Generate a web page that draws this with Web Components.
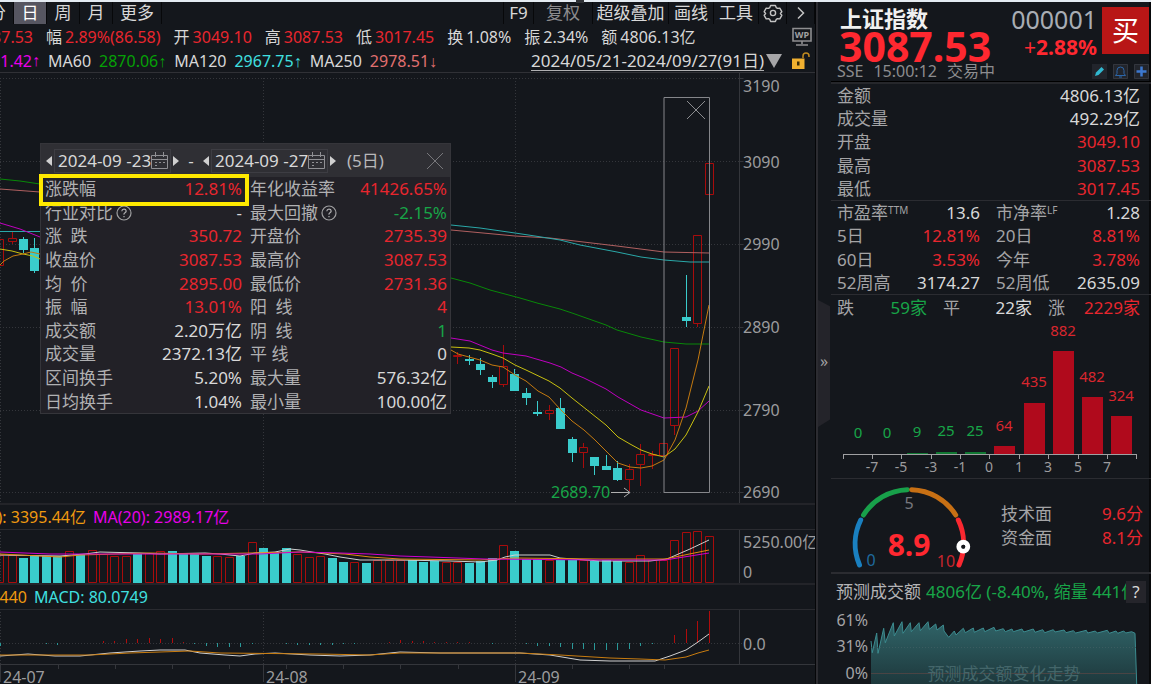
<!DOCTYPE html>
<html lang="zh-CN">
<head>
<meta charset="utf-8">
<title>上证指数 000001</title>
<style>
  html, body { margin: 0; height: 100%; background: #14171c; }
  body {
    overflow: hidden;
    font-family: "Noto Sans", "Noto Sans CJK SC", sans-serif;
    font-size: 17px;
    line-height: 24px;
    color: #d8d8d8;
    --red: #e8262e;
    --green: #18a548;
    --muted: #a4a4a6;
    --rule: #2b2c31;
    --cyan: #3acccc;
  }
</style>
</head>
<body>
<stock-terminal></stock-terminal>
<script>
const BASE = `<style>
  :host { display: block; box-sizing: border-box; }
  * { box-sizing: border-box; }
  svg { display: block; }
  button, input { font: inherit; color: inherit; background: none; border: 0; padding: 0; margin: 0; }
  a { color: inherit; }
  table { border-collapse: collapse; width: 100%; }
  th, td { padding: 0; font-weight: 400; line-height: 23px; white-space: nowrap; }
  th { text-align: left; color: var(--muted); }
  td { text-align: right; }
  .r { color: var(--red); } .g { color: var(--green); }
</style>`;
function component(name, render) {
  customElements.define(name, class extends HTMLElement {
    constructor() { super(); this.attachShadow({ mode: "open" }); }
    connectedCallback() { this.shadowRoot.innerHTML = BASE + render(this); }
  });
}
const line = (color, pts) => `<polyline points="${pts}" fill="none" stroke="${color}"/>`;
const barX = i => Math.floor(0.6 + 11.43 * i);
const RED = "#a80c0c", CYAN = "#3acccc";

component("tool-bar", () => `<style>
  :host { display: flex; justify-content: space-between; height: 22px; font-size: 17px; line-height: 20px; overflow: hidden; }
  div { display: flex; }
  button { border-right: 1px solid #07080a; display: flex; align-items: center; justify-content: center; white-space: nowrap; }
  .cut { width: 14px; justify-content: flex-end; padding-right: 7px; }
  .one { width: 33px; } .on { background: #565661; color: #fff; }
  .more { width: 49px; } .f9 { width: 31px; border-left: 1px solid #07080a; } .fq { width: 59px; color: #8c8c8e; }
  .dj { width: 76px; } .two { width: 45px; } .ic { width: 28px; }
</style>
<div><button class="cut">分</button><button class="one on">日</button><button class="one">周</button><button class="one">月</button><button class="more">更多</button></div>
<div><button class="f9">F9</button><button class="fq">复权</button><button class="dj">超级叠加</button><button class="two">画线</button><button class="two">工具</button>
<button class="ic" aria-label="设置"><svg width="20" height="20" viewBox="0 0 20 20" fill="none" stroke="#c4c4c4" stroke-width="1.4" stroke-linejoin="round"><path d="M7.6 2.5h4.8l.9 2.2 1.2.7 2.3-.3 2 3.6-1.4 1.8 1.4 1.8-2 3.6-2.3-.3-1.2.7-.9 2.2H7.6l-.9-2.2-1.2-.7-2.3.3-2-3.6 1.4-1.8L1.200 8.700l2-3.600 2.300.300 1.200-.700z"/><circle cx="10" cy="10" r="2.600"/></svg></button>
<button class="ic" aria-label="下一页"><svg width="10" height="14" viewBox="0 0 10 14" fill="none" stroke="#c4c4c4" stroke-width="1.500"><path d="M2 1.500 7.500 7 2 12.500"/></svg></button></div>`);

component("quote-strip", () => {
  const items = [["幅","2.89%(86.58)","r"],["开","3049.10","r"],["高","3087.53","r"],["低","3017.45","r"],["换","1.08%",""],["振","2.34%",""],["额","4806.13亿",""]];
  return `<style>
  :host { display: flex; align-items: center; height: 26px; font-size: 16px; white-space: nowrap; gap: 13px; position: relative; }
  .cut { width: 33px; display: flex; justify-content: flex-end; overflow: hidden; }
  span { display: flex; gap: 3px; }
  button { margin: 0 3px 0 auto; height: 20px; }
  </style><div class="cut r">3087.53</div>` + items.map(([k, v, c]) => `<span>${k}<b style="font-weight:400" class="${c}">${v}</b></span>`).join("") +
  `<button aria-label="WP"><svg width="20" height="20" viewBox="0 0 20 20"><path d="M1 1.500h18v12.500H1zM10 14v3M4 18h12" fill="none" stroke="#8e8e90" stroke-width="1.600"/><text x="10" y="11" font-size="9" font-weight="700" text-anchor="middle" fill="#a0a0a2">WP</text></svg></button>`;
});

component("average-strip", () => `<style>
  :host { display: flex; align-items: center; height: 23px; font-size: 16px; white-space: nowrap; border-bottom: 1px solid #303136; gap: 8px; }
  .cut { width: 40px; display: flex; justify-content: flex-end; overflow: hidden; color: #ea00ea; }
  i { font-family: "Liberation Sans", sans-serif; font-style: normal; }
  a { margin-left: auto; font-size: 17px; line-height: 18px; text-decoration: none; border-bottom: 1px solid #b0b0b2; }
  .menu { margin-left: -6px; height: 16px; } .lock { margin: 0 5px 0 2px; height: 18px; }
</style>
<div class="cut">2891.42<i>↑</i></div><span>MA60</span><span style="color:#06a006">2870.06<i>↑</i></span><span>MA120</span><span style="color:#40e0e0">2967.75<i>↑</i></span><span>MA250</span><span style="color:#e07070">2978.51<i>↓</i></span>
<a href="#range">2024/05/21-2024/09/27(91日)</a>
<button class="menu" aria-label="选择区间"><svg width="16" height="14"><path d="M0 0h16L8 14z" fill="#a6a6a8"/></svg></button>
<button class="lock" aria-label="解锁"><svg width="18" height="18" viewBox="0 0 18 18"><path d="M0 6.500h12.500V17H0z" fill="#f0b030"/><path d="M11 6V4q0-3 3-3t3 3v1" fill="none" stroke="#c08a20" stroke-width="1.500"/><path d="M5 9.500h2.500v4H5z" fill="#3a2c08"/></svg></button>`);

component("price-chart", () => {
  const candles = [[0,"R",239,265,239,265],[1,"R",238,241,232,244],[2,"C",239,250,237,253],[3,"C",248,271,238,273],
    [40,"R",355,356,352,364],[41,"C",359,361,355,365],[42,"C",364,370,358,375],[43,"C",377,382,375,388],[44,"R",366,384,345,387],[45,"C",374,391,369,391],[46,"C",393,398,388,405],[47,"C",412,414,401,416],[48,"R",410,413,405,420],[49,"C",408,429,398,429],[50,"C",439,453,437,462],[51,"R",447,452,443,468],[52,"C",457,466,457,475],[53,"C",466,470,455,470],[54,"C",468,480,461,481],[55,"R",469,479,464,491],[56,"R",454,464,444,486],[57,"R",454,455,451,469],[58,"R",443,455,443,455],[59,"R",348,425,348,435],[60,"C",317,321,275,327],[61,"R",235,323,235,327],[62,"R",163,194,163,194]];
  const draw = ([i, t, a, b, w1, w2]) => { const x = barX(i);
    return t === "C" ? `<path d="M${x}.5 ${w1}V${w2}" stroke="${CYAN}"/><path d="M${x - 4} ${a}h9V${b}h-9z" fill="${CYAN}"/>`
      : `<path d="M${x}.5 ${w1}V${a}M${x}.5 ${b}V${w2}M${x - 4}.5 ${a}.5h8V${b}.5h-8z" stroke="${RED}" fill="none"/>`; };
  const ticks = [[78,3190,86],[161,3090,162],[244,2990,244],[327,2890,327],[410,2790,410],[492,2690,492]];
  return `<style>:host { position: relative; border-bottom: 2px solid #232429; } svg { width: 100%; height: auto; }
  .close { position: absolute; left: 84%; top: 26px; width: 22px; height: 22px; }</style>
  <svg viewBox="0 73 815 430">
  <g stroke="#34363b" stroke-dasharray="1 2" fill="none">${ticks.map(t => `<path d="M0 ${t[0]}.500H740"/>`).join("")}<path d="M.500 78V504M263.500 78V504M515.500 78V504"/></g>
  <path d="M739.500 73V504${ticks.map(t => `M739.500 ${t[0]}.500h4`).join("")}" stroke="#34363b"/>
  ${candles.map(draw).join("")}
  ${line("#b06060","0,189 40,192 240,215 451,230 515,236 550,238 575,241 617,246 664,252 709,253")}
  ${line("#2aa8a8","0,231.5 40,231.5 300,227 451,225 480,228 515,233 535,236 560,240 580,245 617,252 641,257 664,260 690,262 709,262")}
  ${line("#088808","0,179 20,181 40,184 240,230 451,278 470,283 490,290 505,294 520,298 537,303 560,309 572,313 606,325 617,330 641,337 664,342 686,344 709,344")}
  ${line("#c000c0","0,223 20,229 40,237 240,300 451,338 470,341 492,350 503,353 526,356 550,363 561,367 572,373 584,378 606,389 618,397 641,410 664,418 686,417 698,411 709,401")}
  ${line("#c8c010","0,249 12,251 23,254 33,256 40,259 240,320 451,347 469,348 480,350 492,354 503,358 515,365 526,370 549,381 560,388 572,398 606,425 618,437 630,444 641,450 652,454 664,457 675,449 686,435 698,412 709,386")}
  ${line("#c47a10","0,265 4,261 13,256 23,254 31,252 40,254 240,320 451,350 458,354 480,360 492,365 503,367 515,375 526,381 538,391 549,397 560,409 572,421 584,430 595,440 606,451 618,463 630,467 641,468 652,466 664,460 675,440 686,408 698,360 709,305")}
  <path d="M664 97.500H709.500V492.500H664z" stroke="#85868a" fill="none"/>
  <path d="M611 492.500h18M624 488l6 4.500-6 4.500" stroke="#b0b0b0" fill="none"/>
  <text x="551" y="498" font-size="16" fill="#18a548">2689.70</text>
  <g font-size="16" fill="#9c9c9e">${ticks.map(t => `<text x="743" y="${t[2] + 6}">${t[1]}</text>`).join("")}</g></svg>
  <button class="close" aria-label="关闭区间"><svg width="22" height="22"><path d="M2 2 20 20M20 2 2 20" stroke="#8c8d90"/></svg></button>
  <slot></slot>`;
});

component("date-picker", el => `<style>
  :host { display: flex; align-items: center; gap: 2px; }
  .box { display: flex; align-items: center; border: 1px solid #3d3d43; height: 24px; width: 117px; padding-left: 3px; }
  input { width: 93px; height: 22px; outline: 0; flex: none; }
  button { display: flex; }
</style><button aria-label="前一日"><svg width="6" height="10"><path d="M6 0v10L0 5z" fill="#d0d0d0"/></svg></button>
<div class="box"><input type="text" aria-label="${el.getAttribute("label")}" value="${el.getAttribute("value")}"><button aria-label="日历"><svg width="17" height="17" fill="none" stroke="#909094"><path d="M.500 3.500h16v13H.500zM.500 7.500h16M4.500 0v5M12.500 0v5M4 10.500h2M8 10.500h2M12 10.500h2M4 13.500h2"/></svg></button></div>
<button aria-label="后一日"><svg width="6" height="10"><path d="M0 0v10l6-5z" fill="#d0d0d0"/></svg></button>`);

component("range-stats", () => {
  const q = ` <button aria-label="说明"><svg width="16" height="16" viewBox="0 0 16 16"><circle cx="8" cy="8" r="7" fill="none" stroke="#a0a0a2" stroke-width="1.200"/><path d="M5.800 6.200q.2-2 2.200-2t2.200 1.800q0 1-1.200 1.700T8 9.600M8 11v1.300" fill="none" stroke="#b0b0b2" stroke-width="1.200"/></svg></button>`;
  const rows = [["涨跌幅","12.81%","r","年化收益率","41426.65%","r"],["行业对比"+q,"-","","最大回撤"+q,"-2.15%","g"],["涨&ensp;跌","350.72","r","开盘价","2735.39","r"],["收盘价","3087.53","r","最高价","3087.53","r"],["均&ensp;价","2895.00","r","最低价","2731.36","r"],["振&ensp;幅","13.01%","r","阳&ensp;线","4","r"],["成交额","2.20万亿","","阴&ensp;线","1","g"],["成交量","2372.13亿","","平&nbsp;线","0",""],["区间换手","5.20%","","最大量","576.32亿",""],["日均换手","1.04%","","最小量","100.00亿",""]];
  return `<style>
  :host { position: absolute; left: 40px; top: 70px; width: 411px; background: #222127; border: 1px solid #35353a; }
  header { display: flex; align-items: center; height: 33px; background: #2f2f34; padding: 0 6px 0 5px; }
  .dash { width: 24px; text-align: center; } .days { margin-left: 11px; color: #b8b8ba; }
  .x { margin-left: auto; height: 18px; }
  table { height: 236px; table-layout: fixed; }
  th { padding-left: 4px; color: #b0b0b2; width: 93px; } th + td + th { padding-left: 8px; width: 99px; }
  td { width: 108px; } td:last-child { width: auto; padding-right: 3px; }
  th button { vertical-align: -2px; height: 16px; margin-left: -1px; } th svg { width: 16px; }
  .mark { position: absolute; left: -2px; top: 30px; width: 210px; height: 32px; border: 4px solid #ffe900; pointer-events: none; }
  </style><header><date-picker label="开始日期" value="2024-09 -23"></date-picker><span class="dash">-</span><date-picker label="结束日期" value="2024-09 -27"></date-picker><span class="days">(5日)</span>
  <button class="x" aria-label="关闭"><svg width="18" height="18"><path d="M1 1l16 16M17 1 1 17" stroke="#77777b"/></svg></button></header>
  <table>${rows.map(([a,b,c,d,e,f]) => `<tr><th scope="row">${a}</th><td class="${c}">${b}</td><th scope="row">${d}</th><td class="${f}">${e}</td></tr>`).join("")}</table><div class="mark"></div>`;
});

component("caption-row", () => `<style>:host { display: flex; align-items: center; gap: 7px; height: 25px; font-size: 16px; white-space: nowrap; border-bottom: 1px solid #2a2b30; }</style><slot></slot>`);
component("clip-label", () => `<style>:host { display: flex; justify-content: flex-end; overflow: hidden; color: #f09a10; }</style><slot></slot>`);

component("volume-chart", () => {
  const kinds = "RRCCCCRCRRRRCRRCCCCRRCRCCCRRRCCRCRRRCCCRRCCCRCCCRCCRCCCRRRRRRRR";
  const tops = [555,555,558,556,556,556,551,554,550,554,556,556,554,553,551,551,553,554,556,556,557,556,542,548,552,548,554,557,556,558,562,562,563,560,560,560,560,562,561,562,562,563,561,558,545,551,559,559,560,560,560,560,561,560,561,562,555,560,560,540,532,531,536];
  return `<style>:host { border-bottom: 2px solid #232429; } svg { width: 100%; height: auto; }</style><svg viewBox="0 530 815 53">
  <path d="M.500 532V584M263.500 532V584M515.500 532V584" stroke="#34363b" stroke-dasharray="1 2"/><path d="M739.500 530V584" stroke="#34363b"/>
  ${tops.map((y, i) => kinds[i] === "C" ? `<path d="M${barX(i) - 4} ${y}h9V583h-9z" fill="${CYAN}"/>` : `<path d="M${barX(i) - 4}.500 ${y}.500h8V582.500h-8z" fill="none" stroke="${RED}"/>`).join("")}
  ${line("#d0d0d0","0,555 60,556 85,554 100,552 140,553 160,554 205,553 220,554 240,556 255,553 275,552 290,549 300,550 312,552 325,554 340,557 360,560 400,560 450,561 480,562 497,560 505,557 515,555 550,555 560,558 600,561 650,561 667,559 690,549 709,540")}
  ${line("#e08a10","0,554 60,557 80,555 150,553 200,554 300,552 345,554 370,557 400,559 480,560 515,558 600,559 665,559 709,550")}
  ${line("#d000d0","0,552 50,554 150,554 260,554 300,552 340,553 370,554 400,556 430,557 485,559 600,560 665,560 709,553")}
  <g font-size="16" fill="#9c9c9e"><text x="743" y="548">5250.00亿</text><text x="743" y="578">0</text></g></svg>`;
});

component("macd-chart", () => {
  const v = [3,0,0,0,1,2,0,0,0,-2,-2,-4,-4,-5,-4,-5,-1,1,3,4,4,4,1,0,0,1,2,2,2,2,1,1,0,0,-1,-3,-2,-2,-1,-1,-1,-1,0,1,0,0,1,3,3,4,6,6,7,7,7,6,3,1,0,-8,-14,-22,-32];
  return `<style>svg { width: 100%; height: auto; }</style><svg viewBox="0 610 815 74">
  <path d="M0 643.500H743M.500 612V664M263.500 612V664M515.500 612V664" stroke="#34363b" stroke-dasharray="1 2"/>
  <path d="M739.500 610V664M0 664.500H815M.500 664V682M263.500 664V682M515.500 664V682M58.500 664v5M115.500 664v5M172.500 664v5M229.500 664v5M286.500 664v5M343.500 664v5M400.500 664v5M458.500 664v5M572.500 664v5M629.500 664v5M664.500 664v5" stroke="#34363b"/>
  ${v.map((h, i) => h ? `<path d="M${barX(i)}.500 643v${h}" stroke="${h > 0 ? "#2a9898" : "#b00c0c"}"/>` : "").join("")}
  ${line("#d0d0d0","0,656 28,654 55,656 80,656 110,653 140,651 160,650 185,650 200,653 225,655 240,656 255,654 275,653 310,655 340,656 370,655 400,652 440,653 520,653 550,655 580,660 610,661 655,661 670,656 686,650 698,642 709,634")}
  ${line("#c87c10","0,655 90,655 130,653 190,651 220,653 320,654 370,655 400,653 520,653 560,655 610,658 640,659 665,660 686,657 698,653 709,650")}
  <g font-size="16" fill="#9c9c9e"><text x="743" y="650">0.0</text><text x="3" y="683">24-07</text><text x="266" y="683">24-08</text><text x="518" y="683">24-09</text></g></svg>`;
});

component("panel-gutter", () => `<style>
  :host { display: flex; flex-direction: column; border-left: 1px solid #050608; background: linear-gradient(90deg, #2c2c31 2px, transparent 2px); }
  button { margin: 298px 1px 0 2px; padding-bottom: 6px; height: 127px; width: 12px; background: #24242a; clip-path: polygon(0 0, 100% 5%, 100% 94%, 0 100%); color: #a0a0a2; font-size: 16px; line-height: 20px; }
</style><button aria-label="收起侧栏">»</button>`);

component("quote-header", () => `<style>
  :host { height: 80px; display: grid; grid-template-columns: 1fr auto 49px; align-content: start; padding: 3px 0 0 6px; border-bottom: 1px solid #000; white-space: nowrap; }
  h1 { margin: 0 0 0 3px; font-size: 22px; line-height: 26px; color: #f0f0f0; }
  .price { font-size: 41px; font-weight: 700; line-height: 30px; color: #ff2830; margin-left: 2px; }
  .code { font-size: 25px; line-height: 28px; color: #a8adb4; text-align: right; }
  .pct { font-size: 21px; line-height: 28px; color: #ff2830; font-weight: 700; text-align: right; }
  .mid { padding-right: 5px; } .pct span { font-weight: 400; }
  .buy { background: #b81616; color: #fff; width: 47px; height: 47px; font-size: 27px; line-height: 47px; margin-top: 2px; }
  .status { grid-column: 1 / 4; display: flex; align-items: center; font-size: 16px; color: #8c8c8e; height: 20px; gap: 10px; line-height: 20px; }
  .icons { margin: 0 2px 0 auto; display: flex; gap: 6px; } .icons button { height: 15px; width: 15px; background: #22252c; }
</style>
<div><h1>上证指数</h1><div class="price">3087.53</div></div>
<div class="mid"><div class="code">000001</div><div class="pct"><span>+</span>2.88%</div></div>
<button class="buy">买</button>
<div class="status"><span>SSE</span><span>15:00:12</span><span>交易中</span><div class="icons">
<button aria-label="画笔"><svg width="15" height="15"><path d="m3 12 1-3.500L9.500 3l2.500 2.500L6.500 11z" fill="#30b8d0"/></svg></button>
<button aria-label="提醒"><svg width="15" height="15" fill="none" stroke="#2c66a8"><path d="M.500.500h14v14H.500z" stroke="#33363e"/><path d="M2.500 11.500h10l-1.500-2V6.500q0-3.500-3.500-3.500T4 6.500v3zM6 13h3"/></svg></button>
<button aria-label="添加"><svg width="15" height="15"><path d="M.500.500h14v14H.500z" fill="none" stroke="#33363e"/><path d="M7.500 2.500v10M2.500 7.500h10" stroke="#3c78d0" stroke-width="2.500"/></svg></button></div></div>`);

component("quote-figures", () => {
  const one = [["金额","4806.13亿",""],["成交量","492.29亿",""],["开盘","3049.10","r"],["最高","3087.53","r"],["最低","3017.45","r"]];
  const two = [["市盈率<sup>TTM</sup>","13.6","","市净率<sup>LF</sup>","1.28",""],["5日","12.81%","r","20日","8.81%","r"],["60日","3.53%","r","今年","3.78%","r"],["52周高","3174.27","","52周低","2635.09",""]];
  return `<style>
  :host { border-top: 2px solid #26272b; }
  table { border-bottom: 1px solid var(--rule); } .a { height: 117px; } .b { height: 94px; table-layout: fixed; }
  th { padding-left: 6px; } td { padding-right: 11px; } .b th { width: 74px; } .b th + td + th { padding-left: 5px; }
  sup { font-size: 10px; line-height: 10px; vertical-align: 5px; }
  .c { display: grid; grid-template-columns: 24px 74px 32px 65px 31px 1fr; height: 26px; align-items: center; padding: 0 11px 0 6px; white-space: nowrap; }
  .c span { color: var(--muted); } .c b { font-weight: 400; text-align: right; } .c span + b + span { padding-left: 8px; }
  .c b:nth-child(2) { margin-right: 8px; }
  .n { margin-left: 8px; }
  </style><table class="a">${one.map(([a,b,c]) => `<tr><th scope="row">${a}</th><td class="${c}">${b}</td></tr>`).join("")}</table>
  <table class="b">${two.map(([a,b,c,d,e,f]) => `<tr><th scope="row">${a}</th><td class="${c}">${b}</td><th scope="row">${d}</th><td class="${f}">${e}</td></tr>`).join("")}</table>
  <div class="c"><span>跌</span><b class="g">59家</b><span>平</span><b>22家</b><span class="n">涨</span><b class="r">2229家</b></div>`;
});

component("spread-chart", () => {
  const bars = [[858,454,"0",433],[887,454,"0",433],[917,453,"9",432],[946,452,"25",431],[975,452,"25",431],[1004,446,"64",426],[1034,403,"435",382],[1063,351,"882",331],[1092,397,"482",377],[1121,416,"324",396]];
  const marks = [843,872,901,931,960,989,1019,1048,1078,1107,1136], names = ["","-7","-5","-3","-1","0","1","3","5","7",""];
  return `<style>:host { border-bottom: 1px solid var(--rule); } svg { width: 100%; height: auto; }</style><svg viewBox="831 321 320 157" text-anchor="middle" font-size="15">
  ${bars.map(([x, y, t, ly], i) => `<path d="M${x - 10} ${y}h21V454h-21z" fill="${i < 5 ? "#107832" : "#b00a1c"}"/><text x="${x}" y="${ly + 5}" fill="${i < 5 ? "#18a548" : "#d8262e"}">${t}</text>`).join("")}
  <path d="M843 454.500H1137${marks.map(x => `M${x}.500 454v5`).join("")}" stroke="#a0a0a2"/>
  <g font-size="14" fill="#9c9c9e">${marks.map((x, i) => names[i] && `<text x="${x}" y="472">${names[i]}</text>`).join("")}</g></svg>`;
});

component("score-panel", () => `<style>
  :host { display: grid; grid-template-columns: 162px 1fr; height: 95px; border-bottom: 2px solid var(--rule); }
  table { margin: 23px 0 0 8px; width: 142px; height: 47px; align-self: start; }
</style><svg width="162" height="93" viewBox="831 479 162 93" fill="none" stroke-width="5" stroke-linecap="round">
<path d="M859.500 565A54 54 0 0 1 860.700 520" stroke="#1a80c0"/><path d="M863.500 515A54 54 0 0 1 907.300 489.700" stroke="#18a04a"/><path d="M911.700 489.700A54 54 0 0 1 955.700 515" stroke="#c87014"/><path d="M958.300 520A54 54 0 0 1 959 565" stroke="#fa2830"/>
<circle cx="963.300" cy="546.700" r="4.400" fill="#14171c" stroke="#fff" stroke-width="5"/><circle cx="963.300" cy="546.700" r="2" fill="#14171c"/>
<g text-anchor="middle" font-size="16"><text x="909" y="509" fill="#77777e">5</text><text x="871" y="566" fill="#1f6a9c">0</text><text x="946" y="567" fill="#c8262e">10</text><text x="909" y="556" font-size="30" font-weight="700" fill="#ff2830">8.9</text></g></svg>
<table><tr><th scope="row">技术面</th><td class="r">9.6分</td></tr><tr><th scope="row">资金面</th><td class="r">8.1分</td></tr></table>`);

component("forecast-panel", () => {
  const p = "153,498 157,533 170,474 174,535 191,460 196,503 220,443 223,483 246,440 249,475 271,443 274,470 297,443 301,467 324,440 328,463 347,447 351,465 370,450 372,468 386,487 403,468 408,480 430,460 436,473 460,459 463,472 490,459 494,470 522,457 527,468 550,461 556,470 576,462 580,470 606,462 611,471 640,462 645,472 668,464 674,473 700,464 705,471 732,465 738,473 760,467 767,474 799,466 803,474 826,468 832,474 862,466 868,475 888,468 893,475 911,468 917,474 935,470 945,475 950,627".split(" ").map(s => { const [x, y] = s.split(",").map(Number); return `${(820 + x / 3).toFixed(1)},${(475 + y / 3).toFixed(1)}`; }).join(" ");
  return `<style>
  .top { display: flex; align-items: center; height: 36px; padding: 0 5px 0 5px; white-space: nowrap; }
  .top span { color: #b4b4b6; } .top b { font-weight: 400; margin-left: 5px; overflow: hidden; flex: 1; }
  .top button { width: 20px; height: 22px; background: #25252b; flex: none; line-height: 20px; }
  svg { width: 100%; height: auto; }
  </style><div class="top"><span>预测成交额</span><b class="g">4806亿 (-8.40%, 缩量 441亿)</b><button aria-label="说明">?</button></div>
  <svg viewBox="831 610 320 74"><defs><linearGradient id="f" x2="0" y2="1"><stop stop-color="#306468"/><stop offset="1" stop-color="#1c3438"/></linearGradient></defs>
  <polygon points="871,690 ${p}" fill="url(#f)"/>${line("#3c8c90", p)}
  <path d="M871 647.500H1136" stroke="#3a5c60" stroke-dasharray="1 2"/><path d="M871 673.500H1136" stroke="#4a4444"/>
  <text x="1004" y="680" font-size="17" text-anchor="middle" fill="#44666a">预测成交额变化走势</text>
  <g text-anchor="end" font-size="16" fill="#a4a4a6"><text x="868" y="626">61%</text><text x="868" y="652">31%</text><text x="868" y="679">0%</text></g></svg>`;
});

component("stock-terminal", () => `<style>
  :host { display: grid; grid-template-columns: minmax(0, 1fr) 16px 320px; border-top: 2px solid #e4ebf2; min-height: 100vh; position: relative; }
  .notch { position: absolute; left: 50%; top: -2px; width: 8px; height: 3px; background: #303236; }
  aside { box-shadow: inset -2px 0 #08090b; }
</style>
<main><tool-bar></tool-bar><quote-strip></quote-strip><average-strip></average-strip>
<price-chart><range-stats></range-stats></price-chart>
<caption-row><clip-label style="width:86px">MA(10): 3395.44亿</clip-label><span style="color:#ea00ea">MA(20): 2989.17亿</span></caption-row>
<volume-chart></volume-chart>
<caption-row><clip-label style="width:27px">40.0440</clip-label><span style="color:#40e0e0">MACD: 80.0749</span></caption-row>
<macd-chart></macd-chart></main>
<panel-gutter></panel-gutter>
<aside><quote-header></quote-header><quote-figures></quote-figures><spread-chart></spread-chart><score-panel></score-panel><forecast-panel></forecast-panel></aside>
<div class="notch"></div>`);
</script>
</body>
</html>
